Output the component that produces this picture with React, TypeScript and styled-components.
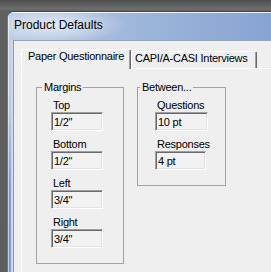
import React from 'react'
import styled, { createGlobalStyle } from 'styled-components'

const GlobalStyle = createGlobalStyle`
  html, body {
    margin: 0;
    padding: 0;
    background: #5e5e5e;
  }
  body {
    font-family: "Liberation Sans", Arial, sans-serif;
  }
`

const Desktop = styled.div`
  width: 271px;
  height: 272px;
  overflow: hidden;
  box-sizing: border-box;
  padding: 11px 0 0 7px;
  background: linear-gradient(180deg, #4d4d4d 0, #6e6e6e 9px, #606060 11px, #5e5e5e 100%);
`

const Window = styled.div`
  display: flex;
  flex-direction: column;
  width: 300px;
  height: 300px;
  box-sizing: border-box;
  border-top: 1px solid #3e4858;
  border-left: 1px solid #6f7888;
  border-top-left-radius: 7px;
  background: #c3d1e4;
  overflow: hidden;
`

const TitleBar = styled.div`
  height: 28px;
  flex-shrink: 0;
  box-sizing: border-box;
  padding: 6px 0 0 6px;
  font-size: 12px;
  line-height: 15px;
  color: #000;
  background:
    radial-gradient(ellipse 70px 18px at 48px 13px, rgba(255, 255, 255, 0.65), rgba(255, 255, 255, 0)),
    linear-gradient(90deg, #bccde4 0, #9cb5da 45%, #819fcf 100%);
  box-shadow: inset 0 1px rgba(255, 255, 255, 0.85), inset 1px 0 rgba(255, 255, 255, 0.6);
`

const FrameRow = styled.div`
  display: flex;
  flex: 1;
`

const LeftFrame = styled.div`
  width: 5px;
  flex-shrink: 0;
  background: linear-gradient(180deg, #c4d2e5 0, #b8cae3 70px, #7d9ed2 150px, #7a9cd2 100%);
  box-shadow: inset -2px 0 #cdd7e5, inset 1px 0 rgba(255, 255, 255, 0.5);
`

const Client = styled.div`
  flex: 1;
  display: flex;
  flex-direction: column;
  box-sizing: border-box;
  padding: 8px 0 0 7px;
  border-top: 1px solid #96a3b6;
  border-left: 1px solid #8d98a8;
  background: repeating-conic-gradient(#f3f3f3 0 25%, #ebebeb 0 50%) 0 0 / 2px 2px;
`

const TabStrip = styled.div`
  display: flex;
  align-items: flex-end;
  height: 19px;
`

const Tab = styled.div<{ $active?: boolean; $width: number }>`
  position: relative;
  z-index: ${p => (p.$active ? 1 : 0)};
  box-sizing: border-box;
  width: ${p => p.$width}px;
  height: ${p => (p.$active ? 20 : 17)}px;
  margin-bottom: ${p => (p.$active ? -1 : 0)}px;
  padding-left: ${p => (p.$active ? 6 : 3)}px;
  border-top: 1px solid #fff;
  border-left: 1px solid #fff;
  border-right: 1px solid #696969;
  border-radius: 2px 2px 0 0;
  box-shadow: inset -1px 0 #a0a0a0;
  background: repeating-conic-gradient(#f3f3f3 0 25%, #ebebeb 0 50%) 0 0 / 2px 2px;
  font-size: 11px;
  line-height: 13px;
  letter-spacing: -0.25px;
  color: #000;
  white-space: nowrap;
`

const Page = styled.div`
  flex: 1;
  display: flex;
  align-items: flex-start;
  gap: 13px;
  padding: 11px 0 0 14px;
  border-top: 1px solid #fff;
  border-left: 1px solid #fff;
`

const Group = styled.fieldset<{ $width: number }>`
  box-sizing: border-box;
  width: ${p => p.$width}px;
  min-width: 0;
  margin: 0;
  padding: 0 0 15px 0;
  border: 1px solid #a3a3a3;
`

const Legend = styled.legend<{ $indent: number }>`
  margin-left: ${p => p.$indent}px;
  padding: 0 2px;
  font-size: 11px;
  line-height: 14px;
  letter-spacing: -0.25px;
  color: #000;
`

const FieldList = styled.div<{ $indent: number }>`
  display: flex;
  flex-direction: column;
  gap: 7px;
  padding: 5px 0 0 ${p => p.$indent}px;
`

const Field = styled.div`
  display: flex;
  flex-direction: column;
`

const Label = styled.label`
  display: block;
  padding-left: 2px;
  font-size: 11px;
  line-height: 13px;
  letter-spacing: -0.25px;
  color: #000;
`

const ValueBox = styled.input<{ $width: number }>`
  display: block;
  box-sizing: border-box;
  width: ${p => p.$width}px;
  height: 19px;
  margin: 0;
  padding: 0 0 0 2px;
  border: 1px solid;
  border-color: #a0a0a0 #fff #fff #a0a0a0;
  box-shadow: inset 1px 1px #696969, inset -1px -1px #e3e3e3;
  background: #f2f2f2;
  font-family: "Liberation Sans", Arial, sans-serif;
  font-size: 11px;
  letter-spacing: -0.25px;
  color: #000;
  outline: none;
`

type Item = { label: string; value: string; width: number }

const margins: Item[] = [
  { label: 'Top', value: '1/2"', width: 52 },
  { label: 'Bottom', value: '1/2"', width: 52 },
  { label: 'Left', value: '3/4"', width: 52 },
  { label: 'Right', value: '3/4"', width: 52 },
]

const between: Item[] = [
  { label: 'Questions', value: '10 pt', width: 53 },
  { label: 'Responses', value: '4 pt', width: 51 },
]

const FieldGroup = ({
  title,
  items,
  width,
  legendIndent,
  indent,
}: {
  title: string
  items: Item[]
  width: number
  legendIndent: number
  indent: number
}) => (
  <Group $width={width}>
    <Legend $indent={legendIndent}>{title}</Legend>
    <FieldList $indent={indent}>
      {items.map(item => (
        <Field key={item.label}>
          <Label>{item.label}</Label>
          <ValueBox $width={item.width} value={item.value} readOnly />
        </Field>
      ))}
    </FieldList>
  </Group>
)

export default function App() {
  return (
    <>
      <GlobalStyle />
      <Desktop>
        <Window>
          <TitleBar>Product Defaults</TitleBar>
          <FrameRow>
            <LeftFrame />
            <Client>
              <TabStrip>
                <Tab $active $width={110}>Paper Questionnaire</Tab>
                <Tab $width={126}>CAPI/A-CASI Interviews</Tab>
              </TabStrip>
              <Page>
                <FieldGroup title="Margins" items={margins} width={88} legendIndent={5} indent={14} />
                <FieldGroup title="Between..." items={between} width={89} legendIndent={2} indent={17} />
              </Page>
            </Client>
          </FrameRow>
        </Window>
      </Desktop>
    </>
  )
}
